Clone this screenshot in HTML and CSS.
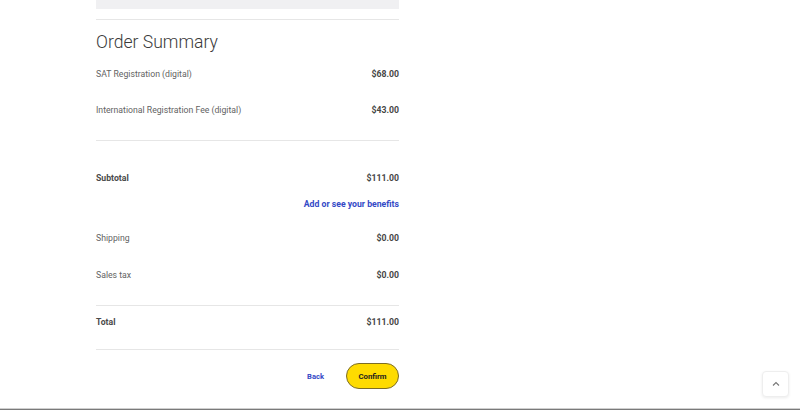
FILE: index.html
```html
<!DOCTYPE html>
<html lang="en">
<head>
<meta charset="utf-8">
<title>Order Summary</title>
<link rel="stylesheet" href="styles.css">
</head>
<body>
<main class="page">
  <div class="top-box"></div>
  <hr class="rule rule-top">
  <h2 class="title">Order Summary</h2>
  <section class="items">
    <div class="row"><span class="label">SAT Registration (digital)</span><span class="amount">$68.00</span></div>
    <div class="row"><span class="label">International Registration Fee (digital)</span><span class="amount">$43.00</span></div>
  </section>
  <hr class="rule">
  <section class="totals">
    <div class="row"><span class="label strong">Subtotal</span><span class="amount">$111.00</span></div>
    <div class="link-row"><a class="link" href="#">Add or see your benefits</a></div>
    <div class="row"><span class="label">Shipping</span><span class="amount">$0.00</span></div>
    <div class="row row-tax"><span class="label">Sales tax</span><span class="amount">$0.00</span></div>
  </section>
  <hr class="rule">
  <div class="row total-row"><span class="label strong">Total</span><span class="amount">$111.00</span></div>
  <hr class="rule">
  <div class="actions">
    <a class="back" href="#">Back</a>
    <button class="confirm" type="button">Confirm</button>
  </div>
</main>
<button class="to-top" type="button" aria-label="Back to top">
  <svg width="8" height="6" viewBox="0 0 8 6"><path d="M1 4.5 L4 1.5 L7 4.5" fill="none" stroke="#777" stroke-width="1.1"/></svg>
</button>
<div class="bottom-bar"></div>
</body>
</html>
```

FILE: styles.css
```css
* { box-sizing: border-box; }
html, body {
  margin: 0;
  padding: 0;
  width: 800px;
  height: 410px;
  overflow: hidden;
  background: #ffffff;
  font-family: Roboto, "Liberation Sans", Arial, sans-serif;
}
.page {
  margin-left: 96px;
  width: 303px;
  display: flex;
  flex-direction: column;
}
.top-box {
  height: 9px;
  background: #f0f0f2;
}
.rule {
  border: 0;
  height: 1px;
  background: #e6e6e6;
  margin: 0;
}
.rule-top { margin-top: 10px; }
.title {
  margin: 11px 0 3px;
  font-size: 17.6px;
  line-height: 22px;
  font-weight: 300;
  color: #3a3a3a;
}
.items {
  padding-bottom: 12px;
}
.row {
  height: 36px;
  display: flex;
  align-items: center;
  justify-content: space-between;
  font-size: 8.7px;
}
.row-tax { margin-top: 1px; }
.label {
  color: #636363;
}
.label.strong {
  font-weight: 700;
  color: #4a4a4a;
}
.amount {
  font-weight: 700;
  color: #464646;
}
.totals {
  padding-top: 19px;
  padding-bottom: 12px;
}
.link-row {
  height: 16px;
  display: flex;
  align-items: center;
  justify-content: flex-end;
  margin-bottom: 8px;
}
.link {
  font-size: 8.7px;
  font-weight: 700;
  color: #3349c6;
  text-decoration: none;
}
.total-row {
  height: 32px;
  margin-bottom: 11px;
}
.actions {
  margin-top: 13px;
  display: flex;
  align-items: center;
  justify-content: flex-end;
  gap: 22px;
}
.back {
  font-size: 7.6px;
  font-weight: 700;
  color: #3349c6;
  text-decoration: none;
}
.confirm {
  width: 53px;
  height: 26px;
  border-radius: 13px;
  border: 1px solid #7c6d25;
  background: #fedb00;
  color: #1e1e1e;
  font-family: Roboto, "Liberation Sans", Arial, sans-serif;
  font-size: 7.8px;
  font-weight: 700;
  padding: 0;
}
.to-top {
  position: fixed;
  left: 762px;
  top: 371px;
  width: 27px;
  height: 26px;
  border-radius: 4px;
  border: 1px solid #eeeeee;
  background: #ffffff;
  box-shadow: 0 1px 3px rgba(0,0,0,0.08);
  padding: 0;
  display: flex;
  align-items: center;
  justify-content: center;
}
.bottom-bar {
  position: fixed;
  left: 0;
  bottom: 0;
  width: 800px;
  height: 2px;
  background: #7a7a7a;
  border-top: 1px solid #cfcfcf;
}
```
